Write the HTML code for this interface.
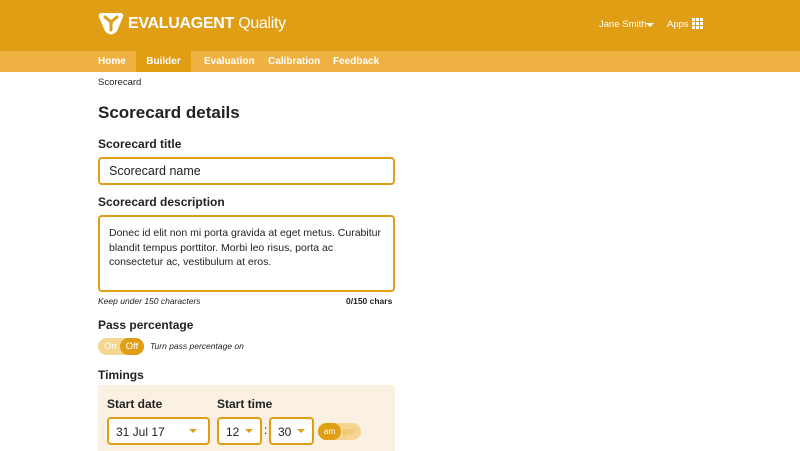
<!DOCTYPE html><html><head><style>
*{box-sizing:border-box;margin:0;padding:0}
body{width:800px;height:451px;overflow:hidden;background:#fff;font-family:"Liberation Sans",sans-serif;color:#222;position:relative}
.hdr{position:absolute;left:0;top:0;width:800px;height:51px;background:#E09E15}
.nav{position:absolute;left:0;top:51px;width:800px;height:21px;background:#EEB142}
.nav span{position:absolute;top:0;height:21px;line-height:21px;color:#fff;font-size:10px;font-weight:bold}
.a{position:absolute}
.lbl{position:absolute;left:98px;font-size:12px;font-weight:bold;color:#222}
.inp{position:absolute;border:2px solid #E09E15;border-radius:4px;background:#fff}
.caret{position:absolute;width:0;height:0;border-left:4px solid transparent;border-right:4px solid transparent;border-top:4px solid #E09E15}
</style></head><body>
<div class="hdr">
<svg class="a" style="left:98px;top:12px" width="26" height="24" viewBox="0 0 26 24"><path d="M4 1 H22 Q26 1 25 5 L19 19 Q13 26 7 19 L1 5 Q0 1 4 1Z" fill="#fff"/><circle cx="13" cy="10" r="2.2" fill="#E09E15"/><path d="M13 10 L7 5 M13 10 L19 5 M13 10 L13 18" stroke="#E09E15" stroke-width="3" stroke-linecap="round"/></svg>
<div class="a" style="left:128px;top:15px;color:#fff;font-size:16px;font-weight:bold;letter-spacing:-0.3px">EVALUAGENT <span style="font-weight:normal">Quality</span></div>
<div class="a" style="left:599px;top:19px;color:#fff;font-size:9.5px">Jane Smith</div>
<div class="caret" style="left:646px;top:23px;border-top-color:#fff"></div>
<div class="a" style="left:667px;top:19px;color:#fff;font-size:9.5px">Apps</div>
<svg class="a" style="left:692px;top:18px" width="11" height="11"><g fill="#fff"><rect x="0" y="0" width="3" height="3"/><rect x="4" y="0" width="3" height="3"/><rect x="8" y="0" width="3" height="3"/><rect x="0" y="4" width="3" height="3"/><rect x="4" y="4" width="3" height="3"/><rect x="8" y="4" width="3" height="3"/><rect x="0" y="8" width="3" height="3"/><rect x="4" y="8" width="3" height="3"/><rect x="8" y="8" width="3" height="3"/></g></svg>
</div>
<div class="nav">
<span style="left:98px">Home</span>
<span style="left:136px;width:55px;background:#E09E15;text-align:center">Builder</span>
<span style="left:204px">Evaluation</span>
<span style="left:268px">Calibration</span>
<span style="left:333px">Feedback</span>
</div>
<div class="a" style="left:98px;top:77px;font-size:9.5px">Scorecard</div>
<div class="a" style="left:98px;top:103px;font-size:17px;font-weight:bold">Scorecard details</div>
<div class="lbl" style="top:137px">Scorecard title</div>
<div class="inp" style="left:98px;top:157px;width:297px;height:28px"><div style="padding:5px 9px;font-size:12.5px">Scorecard name</div></div>
<div class="lbl" style="top:195px">Scorecard description</div>
<div class="inp" style="left:98px;top:215px;width:297px;height:77px"><div style="padding:9px 9px;font-size:10.5px;line-height:14.5px">Donec id elit non mi porta gravida at eget metus. Curabitur blandit tempus porttitor. Morbi leo risus, porta ac consectetur ac, vestibulum at eros.</div></div>
<div class="a" style="left:98px;top:296px;font-size:8.5px;font-style:italic">Keep under 150 characters</div>
<div class="a" style="left:346px;top:296px;font-size:8.5px;font-weight:bold">0/150 chars</div>
<div class="lbl" style="top:318px">Pass percentage</div>
<div class="a" style="left:98px;top:338px;width:46px;height:17px;border-radius:9px;background:#F4D591"></div>
<div class="a" style="left:104px;top:341px;font-size:9.5px;color:#fff">On</div>
<div class="a" style="left:120px;top:338px;width:24px;height:17px;border-radius:9px;background:#E09E15;color:#fff;font-size:9.5px;text-align:center;line-height:17px">Off</div>
<div class="a" style="left:150px;top:341px;font-size:8.5px;font-style:italic">Turn pass percentage on</div>
<div class="lbl" style="top:368px">Timings</div>
<div class="a" style="left:98px;top:385px;width:297px;height:66px;background:#FBF1E2"></div>
<div class="lbl" style="left:107px;top:397px">Start date</div>
<div class="lbl" style="left:217px;top:397px">Start time</div>
<div class="inp" style="left:107px;top:417px;width:103px;height:28px"><div style="padding:6px 7px;font-size:12px">31 Jul 17</div></div>
<div class="caret" style="left:189px;top:429px"></div>
<div class="inp" style="left:217px;top:417px;width:45px;height:28px"><div style="padding:6px 7px;font-size:12px">12</div></div>
<div class="caret" style="left:245px;top:429px"></div>
<div class="a" style="left:264px;top:423px;font-size:12px">:</div>
<div class="inp" style="left:269px;top:417px;width:45px;height:28px"><div style="padding:6px 7px;font-size:12px">30</div></div>
<div class="caret" style="left:297px;top:429px"></div>
<div class="a" style="left:318px;top:423px;width:43px;height:17px;border-radius:9px;background:#F4D591"></div>
<div class="a" style="left:343px;top:426px;font-size:8.5px;color:#E8B450">pm</div>
<div class="a" style="left:318px;top:423px;width:23px;height:17px;border-radius:9px;background:#E09E15;color:#fff;font-size:8.5px;text-align:center;line-height:17px">am</div>
</body></html>
